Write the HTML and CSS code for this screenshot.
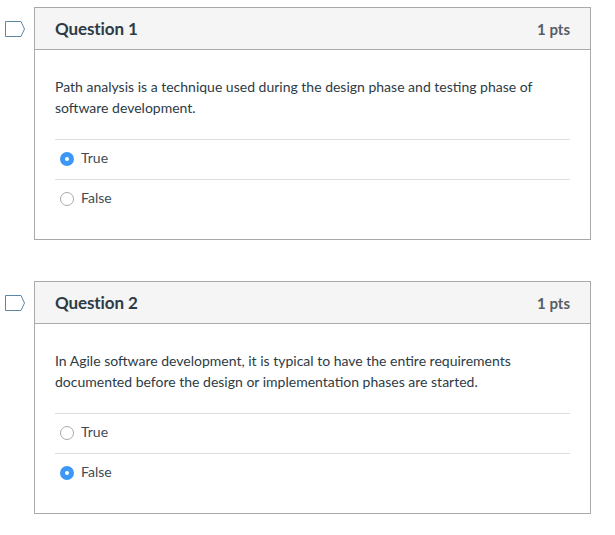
FILE: index.html
```html
<!DOCTYPE html>
<html lang="en">
<head>
<meta charset="utf-8">
<title>Quiz</title>
<link rel="stylesheet" href="styles.css">
</head>
<body>
<main class="quiz">
  <section class="question">
    <svg class="flag" width="20" height="16" viewBox="0 0 20 16"><path d="M.5.5H16L19.5 8L16 15.5H.5Z" fill="#fff" stroke="#5b87a8"/></svg>
    <div class="card">
      <header class="card-head"><h2>Question 1</h2><span class="pts">1 pts</span></header>
      <div class="card-body">
        <p class="prompt">Path analysis is a technique used during the design phase and testing phase of software development.</p>
        <div class="answers">
          <div class="answer"><span class="radio checked"></span><span class="label">True</span></div>
          <div class="answer"><span class="radio"></span><span class="label">False</span></div>
        </div>
      </div>
    </div>
  </section>
  <section class="question">
    <svg class="flag" width="20" height="16" viewBox="0 0 20 16"><path d="M.5.5H16L19.5 8L16 15.5H.5Z" fill="#fff" stroke="#5b87a8"/></svg>
    <div class="card">
      <header class="card-head"><h2>Question 2</h2><span class="pts">1 pts</span></header>
      <div class="card-body">
        <p class="prompt">In Agile software development, it is typical to have the entire requirements documented before the design or implementation phases are started.</p>
        <div class="answers">
          <div class="answer"><span class="radio"></span><span class="label">True</span></div>
          <div class="answer"><span class="radio checked"></span><span class="label">False</span></div>
        </div>
      </div>
    </div>
  </section>
</main>
</body>
</html>
```
FILE: styles.css
```css
* { box-sizing: border-box; }
html, body { margin: 0; background: #fff; }
body { font-family: Lato, sans-serif; color: #2d3b45; font-size: 14px; }
.quiz { display: flex; flex-direction: column; gap: 41px; padding: 7px 24px 0 5px; }
.question { display: flex; align-items: flex-start; }
.flag { flex: none; margin: 14px 9px 0 0; }
.card { flex: 1; border: 1px solid #aaa; }
.card-head { height: 42px; display: flex; justify-content: space-between; align-items: center; padding: 0 20px; background: #f5f5f5; border-bottom: 1px solid #aaa; }
.card-head h2 { margin: 0; font-size: 17px; font-weight: 700; letter-spacing: -0.1px; color: #2d3b45; }
.pts { font-size: 15px; font-weight: 700; color: #555e66; }
.card-body { padding: 26px 20px 20px; }
.prompt { margin: 0 0 21px; line-height: 21px; }
.answer { height: 40px; display: flex; align-items: center; gap: 7px; padding: 0 0 1px 5px; border-top: 1px solid #ddd; color: #3f4c55; }
.label { margin-bottom: 4px; }
.radio { width: 14px; height: 14px; border-radius: 50%; border: 1px solid #aaa; background: #fff; }
.radio.checked { border: 5px solid #3d97f5; background: #fff; }
```
